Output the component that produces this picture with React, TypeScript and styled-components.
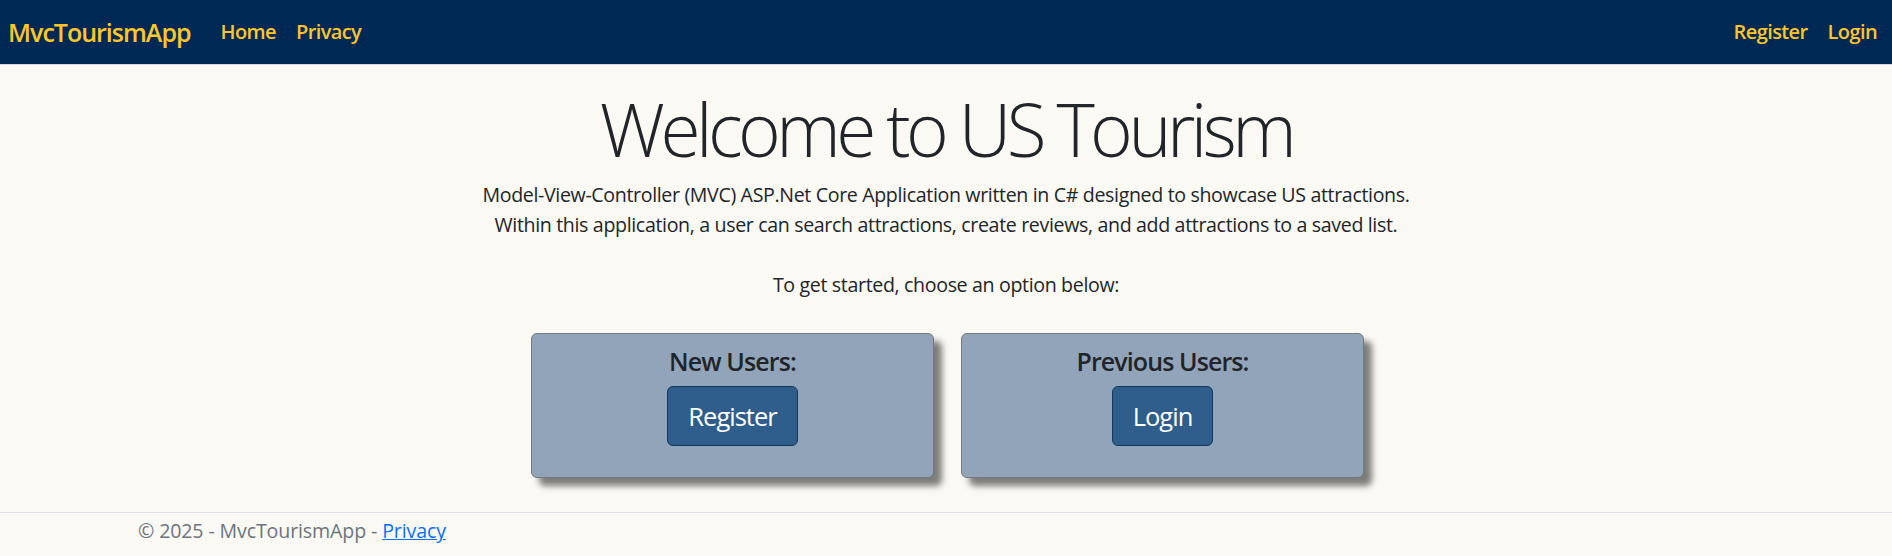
import React from "react";
import styled, { createGlobalStyle } from "styled-components";

const GlobalStyle = createGlobalStyle`
  html, body { margin: 0; padding: 0; }
  body {
    background: #faf9f3;
    font-family: "Open Sans", "Noto Sans", "DejaVu Sans", sans-serif;
    color: #212529;
  }
  * { box-sizing: border-box; }
`;

const Navbar = styled.nav`
  display: flex;
  align-items: center;
  height: 65px;
  padding: 0 15px 0 8px;
  background: #002855;
  border-bottom: 1px solid #d9dbde;
`;

const Brand = styled.a`
  font-size: 25px;
  font-weight: 600;
  line-height: 30px;
  letter-spacing: -1px;
  color: #ffc62a;
  text-decoration: none;
  margin-right: 30px;
`;

const NavList = styled.ul<{ $right?: boolean }>`
  display: flex;
  gap: 20px;
  margin: 0;
  margin-left: ${(p) => (p.$right ? "auto" : "0")};
  padding: 0;
  list-style: none;
`;

const NavLink = styled.a`
  font-size: 20px;
  font-weight: 600;
  line-height: 30px;
  letter-spacing: -0.6px;
  color: #ffc62a;
  text-decoration: none;
`;

const Main = styled.main`
  display: flex;
  flex-direction: column;
  align-items: center;
  text-align: center;
`;

const Title = styled.h1`
  margin: 19px 0 7px;
  font-size: 73px;
  font-weight: 300;
  line-height: 89px;
  letter-spacing: -4.55px;
  color: #212529;
`;

const Lead = styled.p`
  margin: 0;
  font-size: 19.6px;
  line-height: 30px;
  letter-spacing: -0.35px;
  color: #212529;
`;

const CardRow = styled.div`
  display: flex;
  gap: 27px;
  margin: 33px 0 0 3px;
`;

const Card = styled.section`
  display: flex;
  flex-direction: column;
  align-items: center;
  width: 403px;
  padding: 12px 0 31px;
  background: #91a4b9;
  border: 1px solid #737980;
  border-radius: 6px;
  box-shadow: 8px 8px 6px rgba(0, 0, 0, 0.5);
`;

const CardTitle = styled.h5`
  margin: 0 0 10px;
  font-size: 25px;
  font-weight: 600;
  line-height: 30px;
  letter-spacing: -0.9px;
  color: #212529;
`;

const ActionButton = styled.a`
  display: inline-block;
  padding: 10px 20px;
  font-size: 25.5px;
  line-height: 38px;
  letter-spacing: -1px;
  color: #ffffff;
  background: #2f5d8c;
  border: 1px solid #17375a;
  border-radius: 6px;
  text-decoration: none;
`;

const Footer = styled.footer`
  margin-top: 34px;
  padding: 3px 0 0 138px;
  border-top: 1px solid #dee2e6;
  font-size: 19.6px;
  line-height: 30px;
  letter-spacing: -0.13px;
  color: #6c757d;
`;

const FooterLink = styled.a`
  color: #0d6efd;
  text-decoration: underline;
`;

export default function App() {
  return (
    <>
      <GlobalStyle />
      <Navbar>
        <Brand href="#">MvcTourismApp</Brand>
        <NavList>
          <li><NavLink href="#">Home</NavLink></li>
          <li><NavLink href="#">Privacy</NavLink></li>
        </NavList>
        <NavList $right>
          <li><NavLink href="#">Register</NavLink></li>
          <li><NavLink href="#">Login</NavLink></li>
        </NavList>
      </Navbar>
      <Main>
        <Title>Welcome to US Tourism</Title>
        <Lead>
          Model-View-Controller (MVC) ASP.Net Core Application written in C# designed to showcase US attractions.
          <br />
          Within this application, a user can search attractions, create reviews, and add attractions to a saved list.
          <br />
          <br />
          To get started, choose an option below:
        </Lead>
        <CardRow>
          <Card>
            <CardTitle>New Users:</CardTitle>
            <ActionButton href="#">Register</ActionButton>
          </Card>
          <Card>
            <CardTitle>Previous Users:</CardTitle>
            <ActionButton href="#">Login</ActionButton>
          </Card>
        </CardRow>
      </Main>
      <Footer>
        © 2025 - MvcTourismApp - <FooterLink href="#">Privacy</FooterLink>
      </Footer>
    </>
  );
}
